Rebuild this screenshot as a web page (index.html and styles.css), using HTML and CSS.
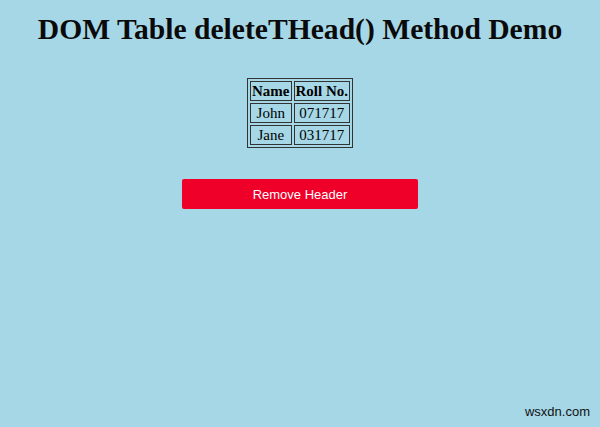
FILE: index.html
```html
<!DOCTYPE html>
<html>
<head>
<meta charset="utf-8">
<link rel="stylesheet" href="styles.css">
</head>
<body>
<h1 class="title">DOM Table deleteTHead() Method Demo</h1>
<table class="tbl" border="1">
<thead><tr><th>Name</th><th>Roll No.</th></tr></thead>
<tbody>
<tr><td>John</td><td>071717</td></tr>
<tr><td>Jane</td><td>031717</td></tr>
</tbody>
</table>
<div class="actions"><button class="btn">Remove Header</button></div>
<div class="mark">wsxdn.com</div>
</body>
</html>
```
FILE: styles.css
```css
html, body { margin: 0; padding: 0; }
body {
  background: #a6d7e7;
  font-family: "Liberation Serif", "Times New Roman", serif;
  color: #000;
  width: 600px;
  height: 427px;
  position: relative;
  overflow: hidden;
}
.title {
  margin: 0;
  padding-top: 11px;
  text-align: center;
  font-size: 29.6px;
  font-weight: bold;
  line-height: 36px;
  color: #0a0a0a;
}
.tbl {
  margin: 31px auto 0;
  border: 1px solid #333;
  border-collapse: separate;
  border-spacing: 2px;
  font-size: 15px;
  line-height: 16px;
}
.tbl th, .tbl td {
  border: 1px solid #333;
  padding: 1px 1px;
  text-align: center;
}
.actions {
  display: flex;
  justify-content: center;
  margin-top: 31px;
}
.btn {
  width: 236px;
  height: 30px;
  background: #ef0028;
  color: #fff;
  border: none;
  border-radius: 2px;
  font-family: "Liberation Sans", Arial, sans-serif;
  font-size: 13px;
}
.mark {
  position: absolute;
  right: 10px;
  bottom: 8px;
  font-family: "Liberation Sans", Arial, sans-serif;
  font-size: 13px;
  color: #111;
}
```
